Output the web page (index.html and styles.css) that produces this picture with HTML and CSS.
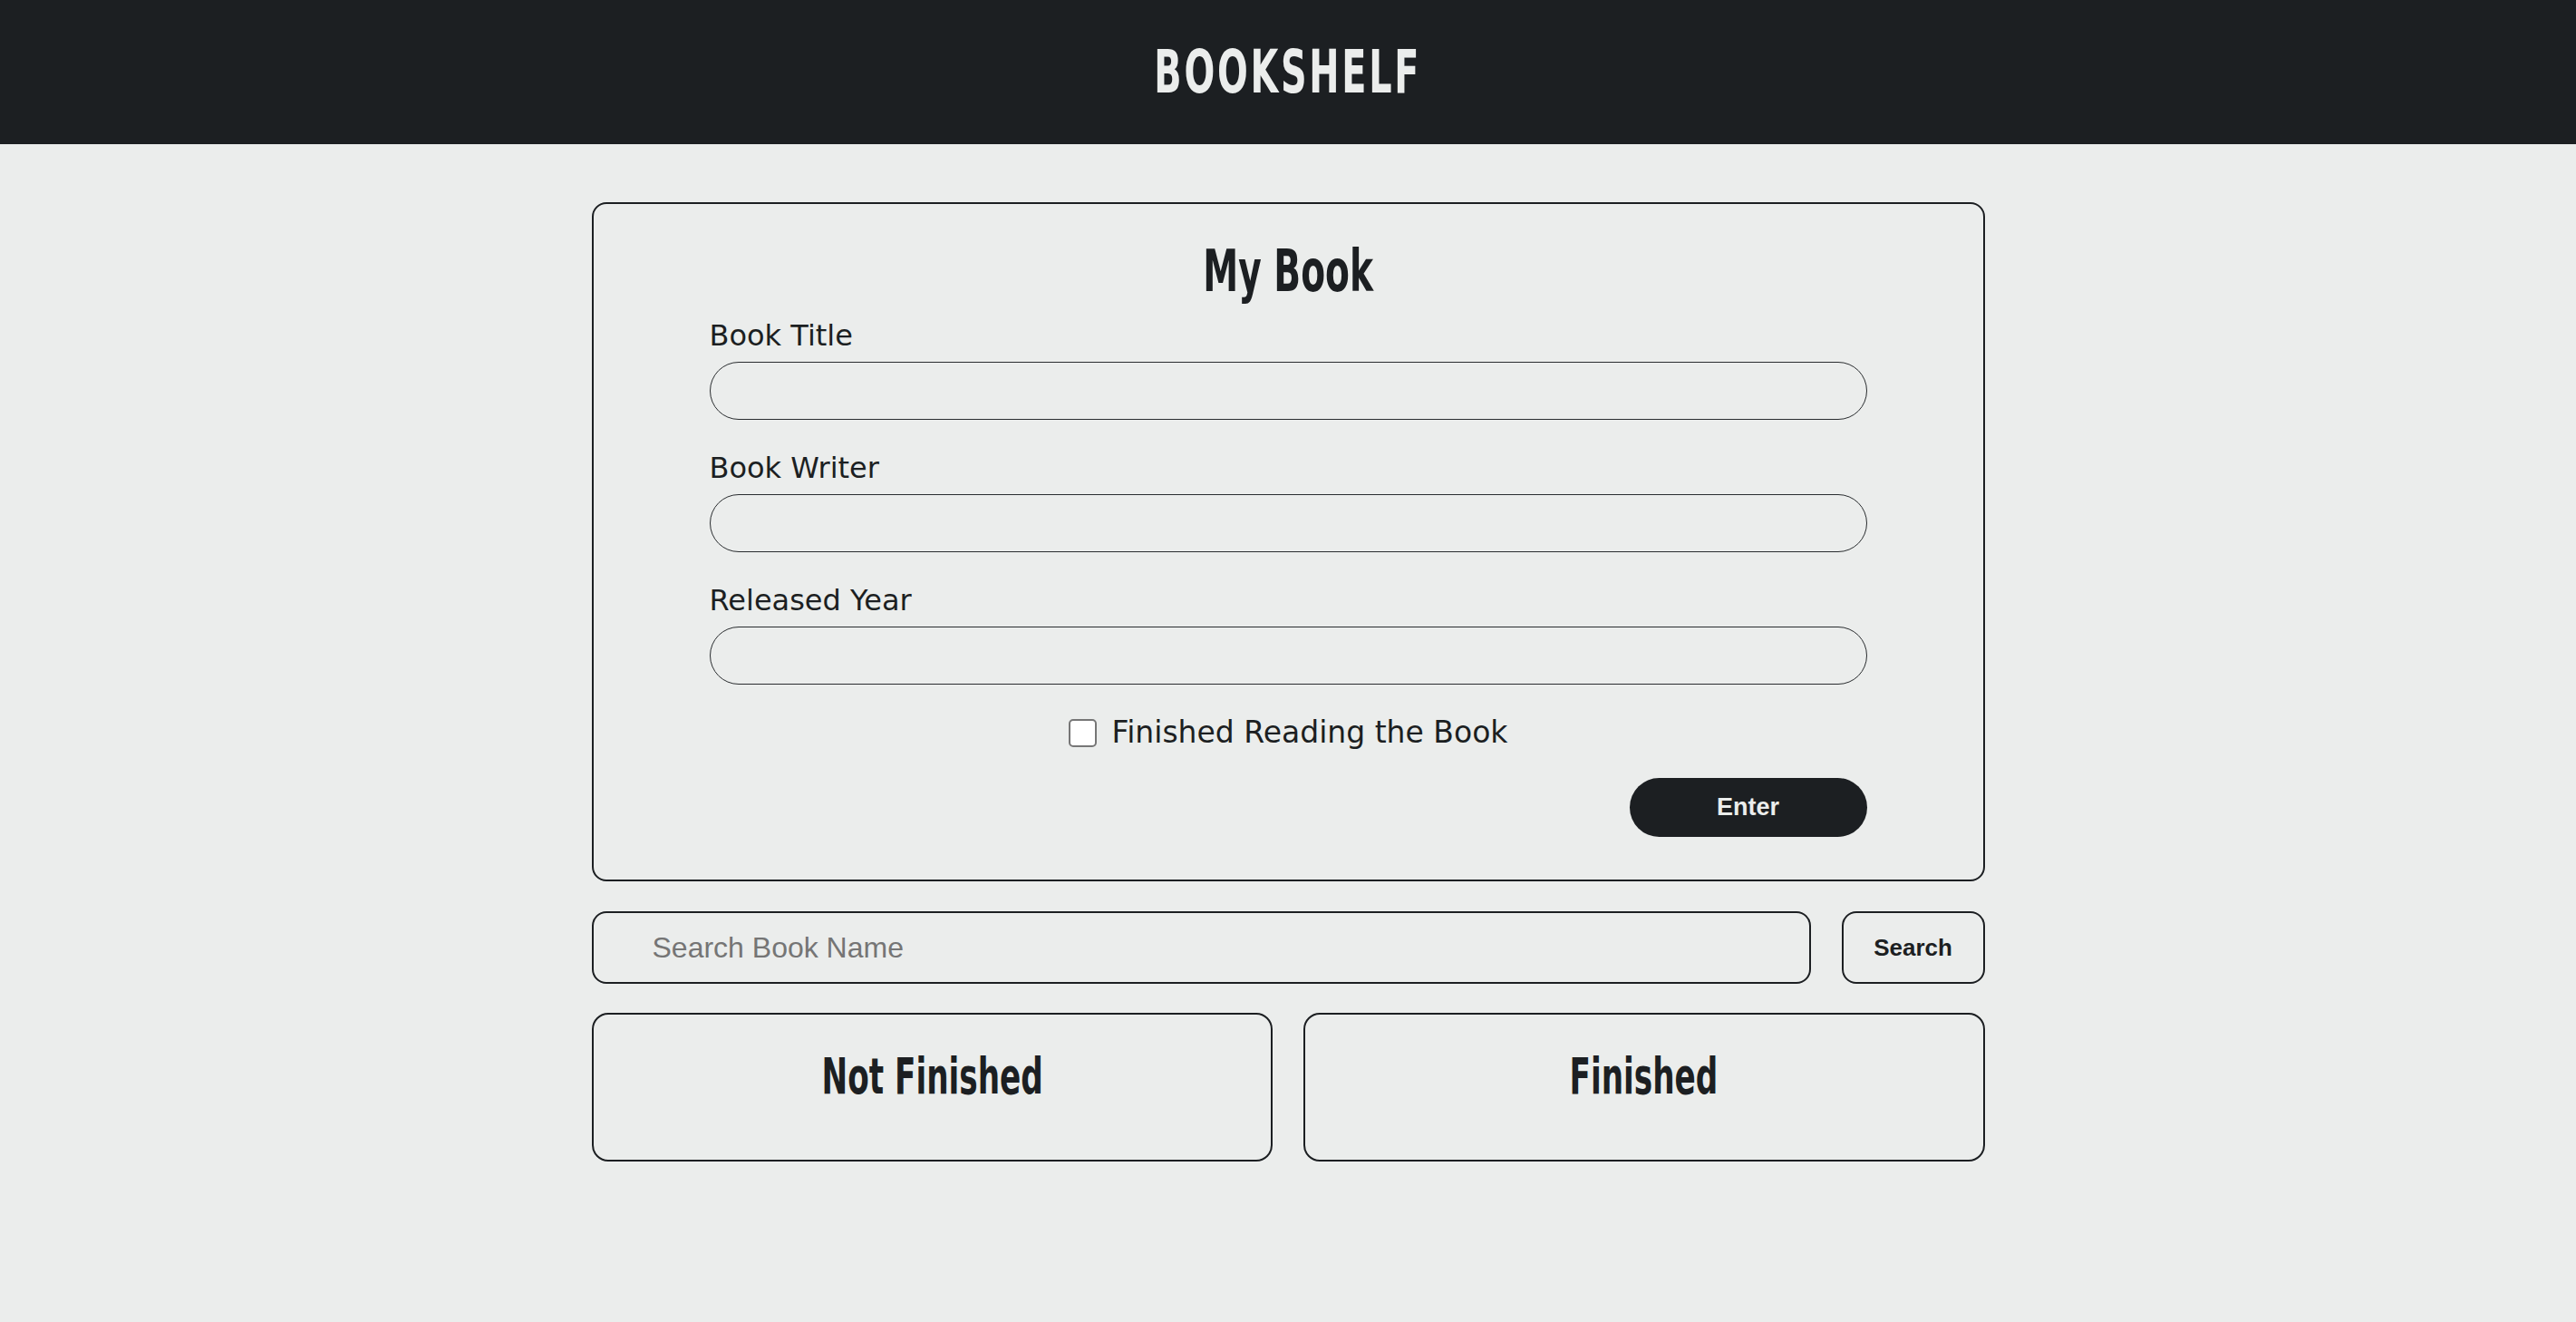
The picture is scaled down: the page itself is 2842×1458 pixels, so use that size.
FILE: index.html
```html
<!DOCTYPE html>
<html lang="en">
<head>
<meta charset="utf-8">
<title>Bookshelf</title>
<link rel="stylesheet" href="styles.css">
</head>
<body>
<header class="topbar">
  <h1 class="brand"><span class="squeeze">BOOKSHELF</span></h1>
</header>
<main class="page">
  <section class="card">
    <h2 class="card-title"><span class="squeeze">My Book</span></h2>
    <form class="form">
      <div class="field">
        <label class="field-label" for="title">Book Title</label>
        <input class="field-input" id="title" type="text">
      </div>
      <div class="field">
        <label class="field-label" for="writer">Book Writer</label>
        <input class="field-input" id="writer" type="text">
      </div>
      <div class="field">
        <label class="field-label" for="year">Released Year</label>
        <input class="field-input" id="year" type="text">
      </div>
      <div class="check-row">
        <input class="check" id="done" type="checkbox">
        <label class="check-label" for="done">Finished Reading the Book</label>
      </div>
      <div class="actions">
        <button class="enter-btn" type="button">Enter</button>
      </div>
    </form>
  </section>
  <div class="search-row">
    <input class="search-input" type="text" placeholder="Search Book Name">
    <button class="search-btn" type="button">Search</button>
  </div>
  <div class="shelves">
    <section class="shelf">
      <h2 class="shelf-title"><span class="squeeze">Not Finished</span></h2>
    </section>
    <section class="shelf">
      <h2 class="shelf-title"><span class="squeeze">Finished</span></h2>
    </section>
  </div>
</main>
</body>
</html>
```
FILE: styles.css
```css
* { box-sizing: border-box; }

body {
  margin: 0;
  background: #ebedec;
  color: #1c1f22;
  font-family: "DejaVu Sans", sans-serif;
}

.squeeze {
  display: inline-block;
  transform: scaleX(0.68);
  transform-origin: center;
  white-space: nowrap;
}

.topbar {
  height: 159px;
  background: #1c1f22;
  display: flex;
  align-items: center;
  justify-content: center;
}

.brand {
  margin: 0;
  color: #ebedec;
  font-family: "Liberation Sans Narrow", "DejaVu Sans Condensed", "Liberation Sans", sans-serif;
  font-weight: 700;
  font-size: 65px;
  line-height: 1;
  letter-spacing: 4px;
}

.page {
  width: 1537px;
  margin: 0 auto;
  padding-top: 64px;
}

.card {
  border: 2px solid #1c1f22;
  border-radius: 16px;
  padding: 42px 128px 47px;
}

.card-title {
  margin: 0;
  text-align: center;
  font-family: "Liberation Sans Narrow", "DejaVu Sans Condensed", "Liberation Sans", sans-serif;
  font-weight: 700;
  font-size: 64px;
  line-height: 64px;
}

.form {
  display: flex;
  flex-direction: column;
  margin-top: 19px;
}

.field {
  display: flex;
  flex-direction: column;
  margin-bottom: 33px;
}

.field-label {
  font-size: 32px;
  line-height: 40px;
  margin-bottom: 9px;
}

.field-input {
  height: 64px;
  width: 100%;
  border: 1px solid #2a2d30;
  border-radius: 32px;
  background: transparent;
  padding: 0 28px;
  font-size: 28px;
  font-family: "DejaVu Sans", sans-serif;
  outline: none;
}

.check-row {
  display: flex;
  align-items: center;
  justify-content: center;
  gap: 17px;
  height: 40px;
  margin-top: 0;
}

.check {
  appearance: none;
  -webkit-appearance: none;
  margin: 0;
  width: 31px;
  height: 31px;
  border: 2px solid #767676;
  border-radius: 5px;
  background: #ffffff;
}

.check-label {
  font-size: 33px;
  line-height: 40px;
}

.actions {
  display: flex;
  justify-content: flex-end;
  margin-top: 30px;
}

.enter-btn {
  width: 262px;
  height: 65px;
  border: none;
  border-radius: 33px;
  background: #1c1f22;
  color: #ebedec;
  font-family: "Liberation Sans", Arial, sans-serif;
  font-weight: 700;
  font-size: 27px;
}

.search-row {
  display: flex;
  gap: 34px;
  margin-top: 33px;
}

.search-input {
  flex: 1;
  height: 80px;
  border: 2px solid #1c1f22;
  border-radius: 16px;
  background: transparent;
  padding: 0 0 0 65px;
  font-family: "Liberation Sans", Arial, sans-serif;
  font-size: 32px;
  color: #1c1f22;
  outline: none;
}

.search-input::placeholder {
  color: #757575;
}

.search-btn {
  width: 158px;
  height: 80px;
  border: 2px solid #1c1f22;
  border-radius: 16px;
  background: transparent;
  color: #1c1f22;
  font-family: "Liberation Sans", Arial, sans-serif;
  font-weight: 700;
  font-size: 26px;
}

.shelves {
  display: grid;
  grid-template-columns: 1fr 1fr;
  gap: 34px;
  margin-top: 32px;
}

.shelf {
  border: 2px solid #1c1f22;
  border-radius: 18px;
  padding: 40px 20px 64px;
}

.shelf-title {
  margin: 0;
  text-align: center;
  font-family: "Liberation Sans Narrow", "DejaVu Sans Condensed", "Liberation Sans", sans-serif;
  font-weight: 700;
  font-size: 56px;
  line-height: 56px;
}
```
